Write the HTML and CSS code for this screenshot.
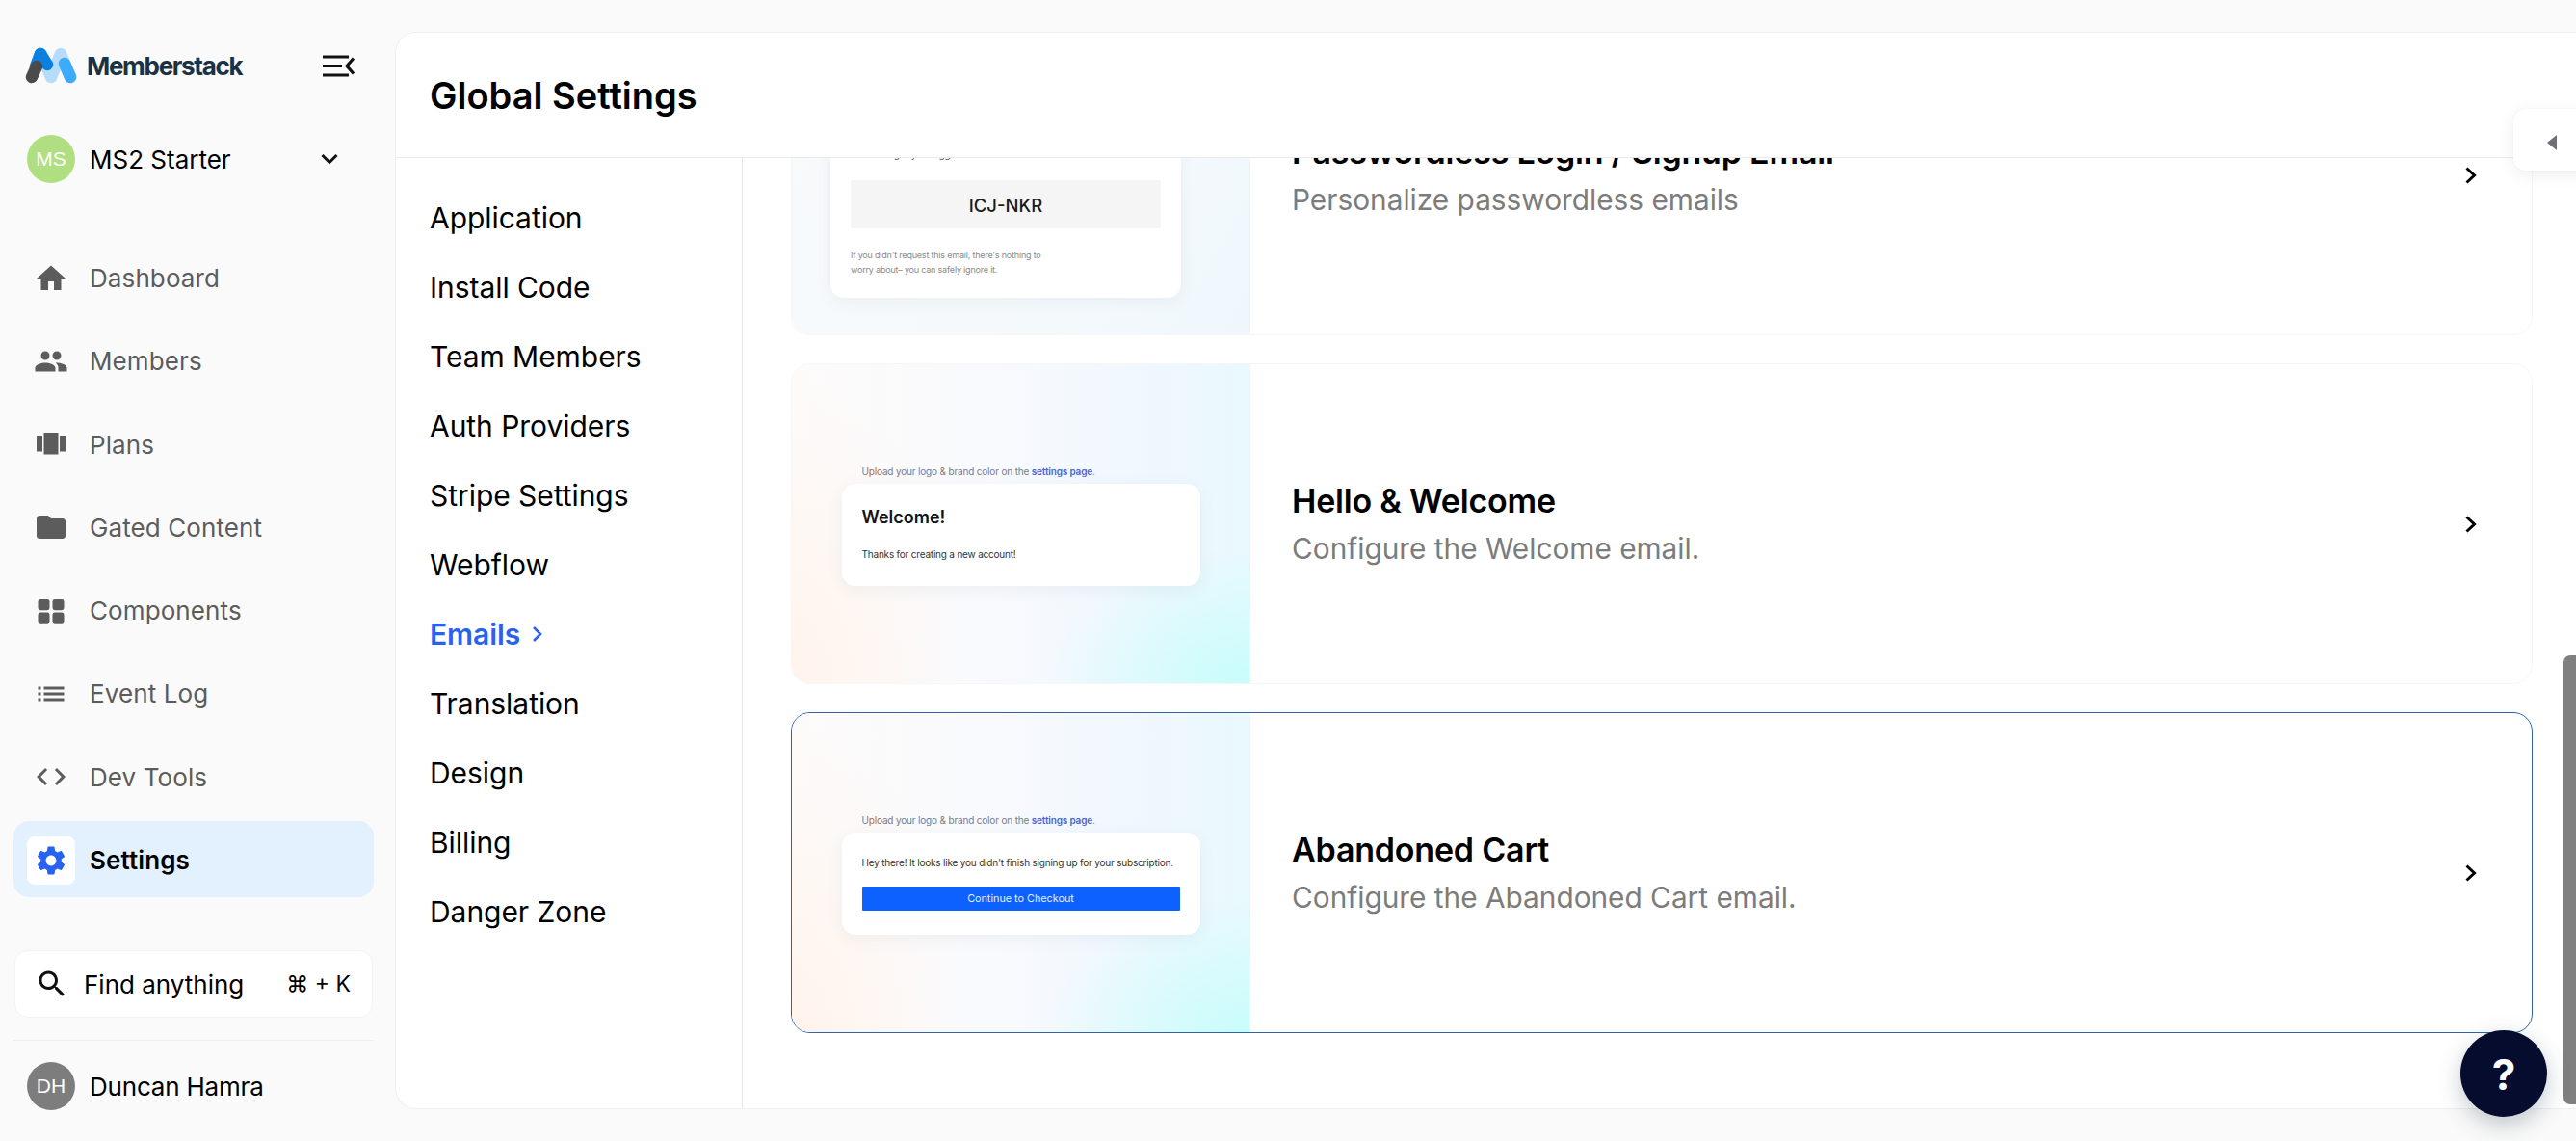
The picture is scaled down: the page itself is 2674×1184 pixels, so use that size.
FILE: index.html
```html
<!DOCTYPE html>
<html lang="en">
<head>
<meta charset="utf-8">
<title>Global Settings</title>
<link rel="stylesheet" href="styles.css">
</head>
<body>
<div class="app">
  <aside class="sidebar">
    <div class="brand">
      <svg class="logo" viewBox="0 0 54 38" fill="none" stroke-linecap="round" stroke-width="12.5">
        <path d="M17 7 L27 31 L37 7 L47 31" stroke="#b5ddfb" stroke-linejoin="round"/>
        <path d="M41 17 L47 31" stroke="#3dabfb"/>
        <path d="M16 7 L23 18" stroke="#0b7fe0"/>
        <path d="M16 7 L11 20" stroke="#0b7fe0"/>
        <path d="M7 31 L12 20" stroke="#4b4b4b"/>
      </svg>
      <span class="wordmark">Memberstack</span>
      <svg class="collapse" viewBox="0 0 33 23" fill="none" stroke="#111" stroke-width="3">
        <path d="M0 2H27M0 11.5H20M0 21H27"/>
        <path d="M32 3.5L25 11.5L32 19.500" stroke-width="3.200"/>
      </svg>
    </div>
    <div class="team">
      <span class="avatar avatar-green">MS</span>
      <span class="team-name">MS2 Starter</span>
      <svg class="team-chevron" viewBox="0 0 18 12" fill="none" stroke="#111" stroke-width="3"><path d="M1.500 2L9 9.500L16.500 2"/></svg>
    </div>
    <nav class="menu">
      <a class="menu-item"><span class="menu-icon"><svg viewBox="0 0 24 24"><path d="M10 20v-6h4v6h5v-8h3L12 3 2 12h3v8z"/></svg></span>Dashboard</a>
      <a class="menu-item"><span class="menu-icon"><svg viewBox="0 0 24 24"><path d="M16 11c1.660 0 2.990-1.340 2.990-3S17.660 5 16 5c-1.660 0-3 1.340-3 3s1.340 3 3 3zm-8 0c1.660 0 2.990-1.340 2.990-3S9.660 5 8 5C6.340 5 5 6.340 5 8s1.340 3 3 3zm0 2c-2.330 0-7 1.170-7 3.500V19h14v-2.500c0-2.330-4.670-3.500-7-3.500zm8 0c-.29 0-.62.02-.97.05 1.160.84 1.970 1.970 1.970 3.450V19h6v-2.500c0-2.330-4.670-3.500-7-3.500z"/></svg></span>Members</a>
      <a class="menu-item"><span class="menu-icon"><svg viewBox="0 0 24 24"><path d="M7 19h10V4H7v15zm-5-2h4V6H2v11zM18 6v11h4V6h-4z"/></svg></span>Plans</a>
      <a class="menu-item"><span class="menu-icon"><svg viewBox="0 0 24 24"><path d="M10 4H4c-1.100 0-1.990.9-1.990 2L2 18c0 1.100.9 2 2 2h16c1.100 0 2-.9 2-2V8c0-1.100-.9-2-2-2h-8l-2-2z"/></svg></span>Gated Content</a>
      <a class="menu-item"><span class="menu-icon"><svg viewBox="0 0 24 24"><rect x="3" y="4" width="8" height="7.500" rx="1.600"/><rect x="13" y="4" width="8" height="7.500" rx="1.600"/><rect x="3" y="13" width="8" height="7.500" rx="1.600"/><rect x="13" y="13" width="8" height="7.500" rx="1.600"/></svg></span>Components</a>
      <a class="menu-item"><span class="menu-icon"><svg viewBox="0 0 24 24"><path d="M3 13h2v-2H3v2zm0 4h2v-2H3v2zm0-8h2V7H3v2zm4 4h14v-2H7v2zm0 4h14v-2H7v2zM7 7v2h14V7H7z"/></svg></span>Event Log</a>
      <a class="menu-item"><span class="menu-icon"><svg viewBox="0 0 24 24"><path d="M9.400 16.600L4.800 12l4.600-4.600L8 6l-6 6 6 6 1.400-1.400zm5.200 0l4.600-4.600-4.600-4.600L16 6l6 6-6 6-1.400-1.400z"/></svg></span>Dev Tools</a>
      <a class="menu-item menu-item-active"><span class="menu-icon menu-icon-active"><svg viewBox="0 0 24 24"><path d="M19.140 12.940c.04-.3.06-.61.06-.94 0-.32-.02-.64-.07-.94l2.030-1.580c.18-.14.23-.41.12-.61l-1.920-3.320c-.12-.22-.37-.29-.59-.22l-2.390.96c-.5-.38-1.030-.7-1.620-.94l-.36-2.540c-.04-.24-.24-.41-.48-.41h-3.840c-.24 0-.43.17-.47.41l-.36 2.540c-.59.24-1.130.57-1.620.94l-2.390-.96c-.22-.08-.47 0-.59.22L2.740 8.870c-.12.21-.08.47.12.61l2.030 1.580c-.05.3-.09.63-.09.94s.02.64.07.94l-2.030 1.580c-.18.14-.23.41-.12.61l1.920 3.320c.12.22.37.29.59.22l2.390-.96c.5.38 1.030.7 1.620.94l.36 2.540c.05.24.24.41.48.41h3.840c.24 0 .44-.17.47-.41l.36-2.540c.59-.24 1.130-.56 1.620-.94l2.390.96c.22.08.47 0 .59-.22l1.920-3.320c.12-.22.07-.47-.12-.61l-2.010-1.580zM12 15.600c-1.980 0-3.600-1.620-3.600-3.600s1.620-3.600 3.600-3.600 3.600 1.620 3.600 3.600-1.620 3.600-3.600 3.600z"/></svg></span>Settings</a>
    </nav>
    <div class="search">
      <svg class="search-icon" viewBox="0 0 24 24"><path d="M15.500 14h-.79l-.28-.27C15.410 12.590 16 11.110 16 9.500 16 5.910 13.090 3 9.500 3S3 5.910 3 9.500 5.910 16 9.500 16c1.610 0 3.090-.59 4.230-1.570l.27.28v.79l5 4.990L20.490 19l-4.990-5zm-6 0C7.010 14 5 11.990 5 9.500S7.010 5 9.500 5 14 7.010 14 9.500 11.990 14 9.500 14z"/></svg>
      <span class="search-label">Find anything</span>
      <span class="search-key">⌘ + K</span>
    </div>
    <div class="user">
      <span class="avatar avatar-gray">DH</span>
      <span class="user-name">Duncan Hamra</span>
    </div>
  </aside>

  <main class="panel">
    <header class="panel-header"><h1>Global Settings</h1></header>
    <div class="panel-body">
      <nav class="settings-nav">
        <a class="settings-link">Application</a>
        <a class="settings-link">Install Code</a>
        <a class="settings-link">Team Members</a>
        <a class="settings-link">Auth Providers</a>
        <a class="settings-link">Stripe Settings</a>
        <a class="settings-link">Webflow</a>
        <a class="settings-link settings-link-active">Emails <svg viewBox="0 0 12 18" fill="none" stroke="#2962f0" stroke-width="2.600"><path d="M2 2l7 7-7 7"/></svg></a>
        <a class="settings-link">Translation</a>
        <a class="settings-link">Design</a>
        <a class="settings-link">Billing</a>
        <a class="settings-link">Danger Zone</a>
      </nav>
      <section class="emails">
        <div class="email-list">
          <article class="email-card">
            <div class="preview preview-pale">
              <div class="mail mail-code">
                <p class="mail-clipped">and we'll get you logged in.</p>
                <div class="code">ICJ-NKR</div>
                <p class="mail-note">If you didn't request this email, there's nothing to<br>worry about– you can safely ignore it.</p>
              </div>
            </div>
            <div class="email-info">
              <h2>Passwordless Login / Signup Email</h2>
              <p>Personalize passwordless emails</p>
            </div>
            <svg class="card-chevron" viewBox="0 0 12 18" fill="none" stroke="#000" stroke-width="3"><path d="M1.500 1.500L9.500 9L1.500 16.500"/></svg>
          </article>
          <article class="email-card">
            <div class="preview">
              <div class="preview-stack">
                <p class="upload">Upload your logo &amp; brand color on the <b>settings page</b>.</p>
                <div class="mail mail-welcome">
                  <h3>Welcome!</h3>
                  <p>Thanks for creating a new account!</p>
                </div>
              </div>
            </div>
            <div class="email-info">
              <h2>Hello &amp; Welcome</h2>
              <p>Configure the Welcome email.</p>
            </div>
            <svg class="card-chevron" viewBox="0 0 12 18" fill="none" stroke="#000" stroke-width="3"><path d="M1.500 1.500L9.500 9L1.500 16.500"/></svg>
          </article>
          <article class="email-card email-card-hover">
            <div class="preview">
              <div class="preview-stack">
                <p class="upload">Upload your logo &amp; brand color on the <b>settings page</b>.</p>
                <div class="mail mail-cart">
                  <p>Hey there! It looks like you didn't finish signing up for your subscription.</p>
                  <div class="checkout">Continue to Checkout</div>
                </div>
              </div>
            </div>
            <div class="email-info">
              <h2>Abandoned Cart</h2>
              <p>Configure the Abandoned Cart email.</p>
            </div>
            <svg class="card-chevron" viewBox="0 0 12 18" fill="none" stroke="#000" stroke-width="3"><path d="M1.500 1.500L9.500 9L1.500 16.500"/></svg>
          </article>
        </div>
      </section>
    </div>
  </main>
  <div class="scroll-thumb"></div>
  <div class="side-tab"><span class="side-tab-arrow"></span></div>
  <button class="help">?</button>
</div>
</body>
</html>
```

FILE: styles.css
```css
* { box-sizing: border-box; }
html, body { margin: 0; height: 100%; overflow: hidden; }
body { background: #fafafa; font-family: Inter, "Liberation Sans", sans-serif; color: #000; }
p, h1, h2, h3 { margin: 0; }

.app { position: relative; display: flex; width: 2674px; height: 1184px; overflow: hidden; }

.sidebar { width: 410px; flex: none; padding: 49px 22px 0 14px; display: flex; flex-direction: column; }
.brand { display: flex; align-items: center; height: 38px; padding-left: 12px; }
.logo { width: 54px; height: 38px; flex: none; }
.wordmark { margin-left: 10px; font-size: 26px; font-weight: 700; color: #1b3244; letter-spacing: -1.3px; }
.collapse { width: 33px; height: 23px; margin-left: auto; margin-right: 20px; }

.team { display: flex; align-items: center; height: 50px; margin-top: 53px; padding-left: 14px; }
.avatar { width: 50px; height: 50px; border-radius: 50%; flex: none; display: flex; align-items: center; justify-content: center; color: #fff; font-size: 21px; font-family: "Liberation Sans", sans-serif; }
.avatar-green { background: #afdf81; }
.avatar-gray { background: #7d7d7d; }
.team-name { margin-left: 15px; font-size: 26px; font-weight: 400; letter-spacing: 0; }
.team-chevron { width: 18px; height: 12px; margin-left: auto; margin-right: 37px; }

.menu { display: flex; flex-direction: column; gap: 7.300px; margin-top: 58px; }
.menu-item { display: flex; align-items: center; height: 79px; padding: 2px 0 0 14px; border-radius: 16px; font-size: 26px; color: #5c5c5c; letter-spacing: 0.1px; }
.menu-icon { width: 50px; height: 50px; margin-right: 15px; flex: none; display: flex; align-items: center; justify-content: center; }
.menu-icon svg { width: 36px; height: 36px; fill: #5c5c5c; }
.menu-item-active { background: #e3f0fe; color: #000; font-weight: 600; }
.menu-icon-active { background: #fff; border-radius: 8px; }
.menu-icon-active svg { fill: #2962f0; }

.search { display: flex; align-items: center; height: 70px; margin: 55px 1px 0; padding: 0 22px 0 20px; background: #fff; border: 1px solid #f3f3f3; border-radius: 14px; }
.search-icon { width: 36px; height: 36px; fill: #111; flex: none; }
.search-label { margin-left: 15px; font-size: 26px; letter-spacing: 0; }
.search-key { margin-left: auto; font-size: 23px; }

.user { display: flex; align-items: center; margin-top: 23px; padding: 22px 0 0 14px; border-top: 1px solid #ededed; }
.user-name { margin-left: 15px; font-size: 26px; letter-spacing: -0.2px; }

.panel { width: 2264px; height: 1118px; margin-top: 33px; background: #fff; border: 1px solid #efefef; border-right: 0; border-radius: 22px 0 0 22px; display: flex; flex-direction: column; overflow: hidden; }
.panel-header { height: 130px; flex: none; padding-left: 35px; display: flex; align-items: center; border-bottom: 1px solid #eaeaea; position: relative; z-index: 1; background: #fff; }
.panel-header h1 { font-size: 38px; font-weight: 600; letter-spacing: 0; }
.panel-body { flex: 1; display: flex; min-height: 0; }

.settings-nav { width: 360px; flex: none; padding: 26px 0 0 35px; border-right: 1px solid #e6e6e6; }
.settings-link { display: flex; align-items: center; gap: 12px; height: 72px; font-size: 30px; letter-spacing: -0.05px; }
.settings-link-active { color: #2962f0; font-weight: 600; }
.settings-link-active svg { width: 12px; height: 18px; }

.emails { flex: 1; min-width: 0; overflow: hidden; padding: 0 45px 0 50px; }
.email-list { display: flex; flex-direction: column; gap: 29px; margin-top: -149px; }
.email-card { display: flex; align-items: center; height: 333px; border: 1px solid #f6f6f6; border-radius: 20px; overflow: hidden; background: #fff; }
.email-card-hover { border-color: #2f63ad; }

.preview { width: 476px; height: 100%; flex: none; display: flex; align-items: center; justify-content: center; border-right: 1px solid #edf3f9;
  background:
    radial-gradient(ellipse 45% 42% at 100% 100%, #c8fdfb 0%, rgba(200, 253, 251, 0) 100%),
    radial-gradient(ellipse 38% 95% at 0% 100%, #fff4ec 0%, rgba(255, 244, 236, 0) 100%),
    linear-gradient(90deg, #fdfbfa 0%, #f9fafd 40%, #eff7fe 80%, #e9f9fe 100%); }
.preview-pale { background: linear-gradient(120deg, #f8fafb 0%, #f4f9fc 70%, #eff7fc 100%); align-items: flex-end; }
.preview-stack { width: 372px; }

.mail { background: #fff; border-radius: 14px; box-shadow: 0 4px 16px rgba(90, 110, 130, 0.08); }
.upload { padding-left: 21px; height: 20px; font-size: 10px; line-height: 20px; color: #7a7a80; margin-bottom: 3px; letter-spacing: -0.17px; }
.upload b { color: #4a63dd; font-weight: 600; }

.mail-welcome { height: 106px; padding: 21px 21px 0; }
.mail-welcome h3 { font-size: 18px; font-weight: 600; line-height: 28px; color: #141414; }
.mail-welcome p { margin-top: 16px; font-size: 10px; line-height: 16px; color: #333; letter-spacing: -0.2px; }

.mail-cart { height: 106px; padding: 23px 21px 0; }
.mail-cart p { font-size: 10px; line-height: 16px; color: #333; white-space: nowrap; letter-spacing: -0.2px; }
.checkout { margin-top: 17px; width: 330px; height: 25px; background: #0d62ff; color: #e6efff; border-radius: 1px; display: flex; align-items: center; justify-content: center; font-size: 10.800px; }

.mail-code { width: 364px; height: 168px; margin: 0 31px 38px 0; padding: 0 21px; border-radius: 14px; }
.mail-clipped { height: 46px; padding-top: 11px; font-size: 10px; line-height: 16px; color: #555; }
.code { height: 50px; padding-top: 2px; background: #f5f5f5; display: flex; align-items: center; justify-content: center; font-size: 18.500px; font-weight: 500; color: #1a1a1a; }
.mail-note { margin-top: 20px; font-size: 9px; line-height: 15px; color: #8a8a8a; letter-spacing: -0.2px; }

.email-info { flex: 1; min-width: 0; padding-left: 43px; }
.email-info h2 { font-size: 34px; font-weight: 600; line-height: 46px; letter-spacing: -0.2px; }
.email-info p { margin-top: 4px; font-size: 29.800px; line-height: 44px; color: #7c7c7c; }
.card-chevron { width: 12px; height: 18px; flex: none; margin-right: 57px; }

.scroll-thumb { position: absolute; left: 2661px; top: 680px; width: 13px; height: 466px; background: #808080; border-radius: 7px 0 0 7px; z-index: 2; }
.side-tab { position: absolute; left: 2609px; top: 113px; width: 80px; height: 64px; background: #fff; border-radius: 12px; box-shadow: 0 4px 18px rgba(0, 0, 0, 0.07), 0 0 1px rgba(0, 0, 0, 0.12); z-index: 2; }
.side-tab-arrow { position: absolute; left: 35px; top: 27px; width: 0; height: 0; border-style: solid; border-width: 8px 10px 8px 0; border-color: transparent #6f6f78 transparent transparent; }
.help { position: absolute; left: 2554px; top: 1069px; width: 90px; height: 90px; border: 0; border-radius: 50%; background: #050c2e; color: #fff; font: 700 44px Inter, sans-serif; box-shadow: 0 8px 24px rgba(40, 60, 80, 0.28); padding: 2px 0 0; z-index: 2; }
```
